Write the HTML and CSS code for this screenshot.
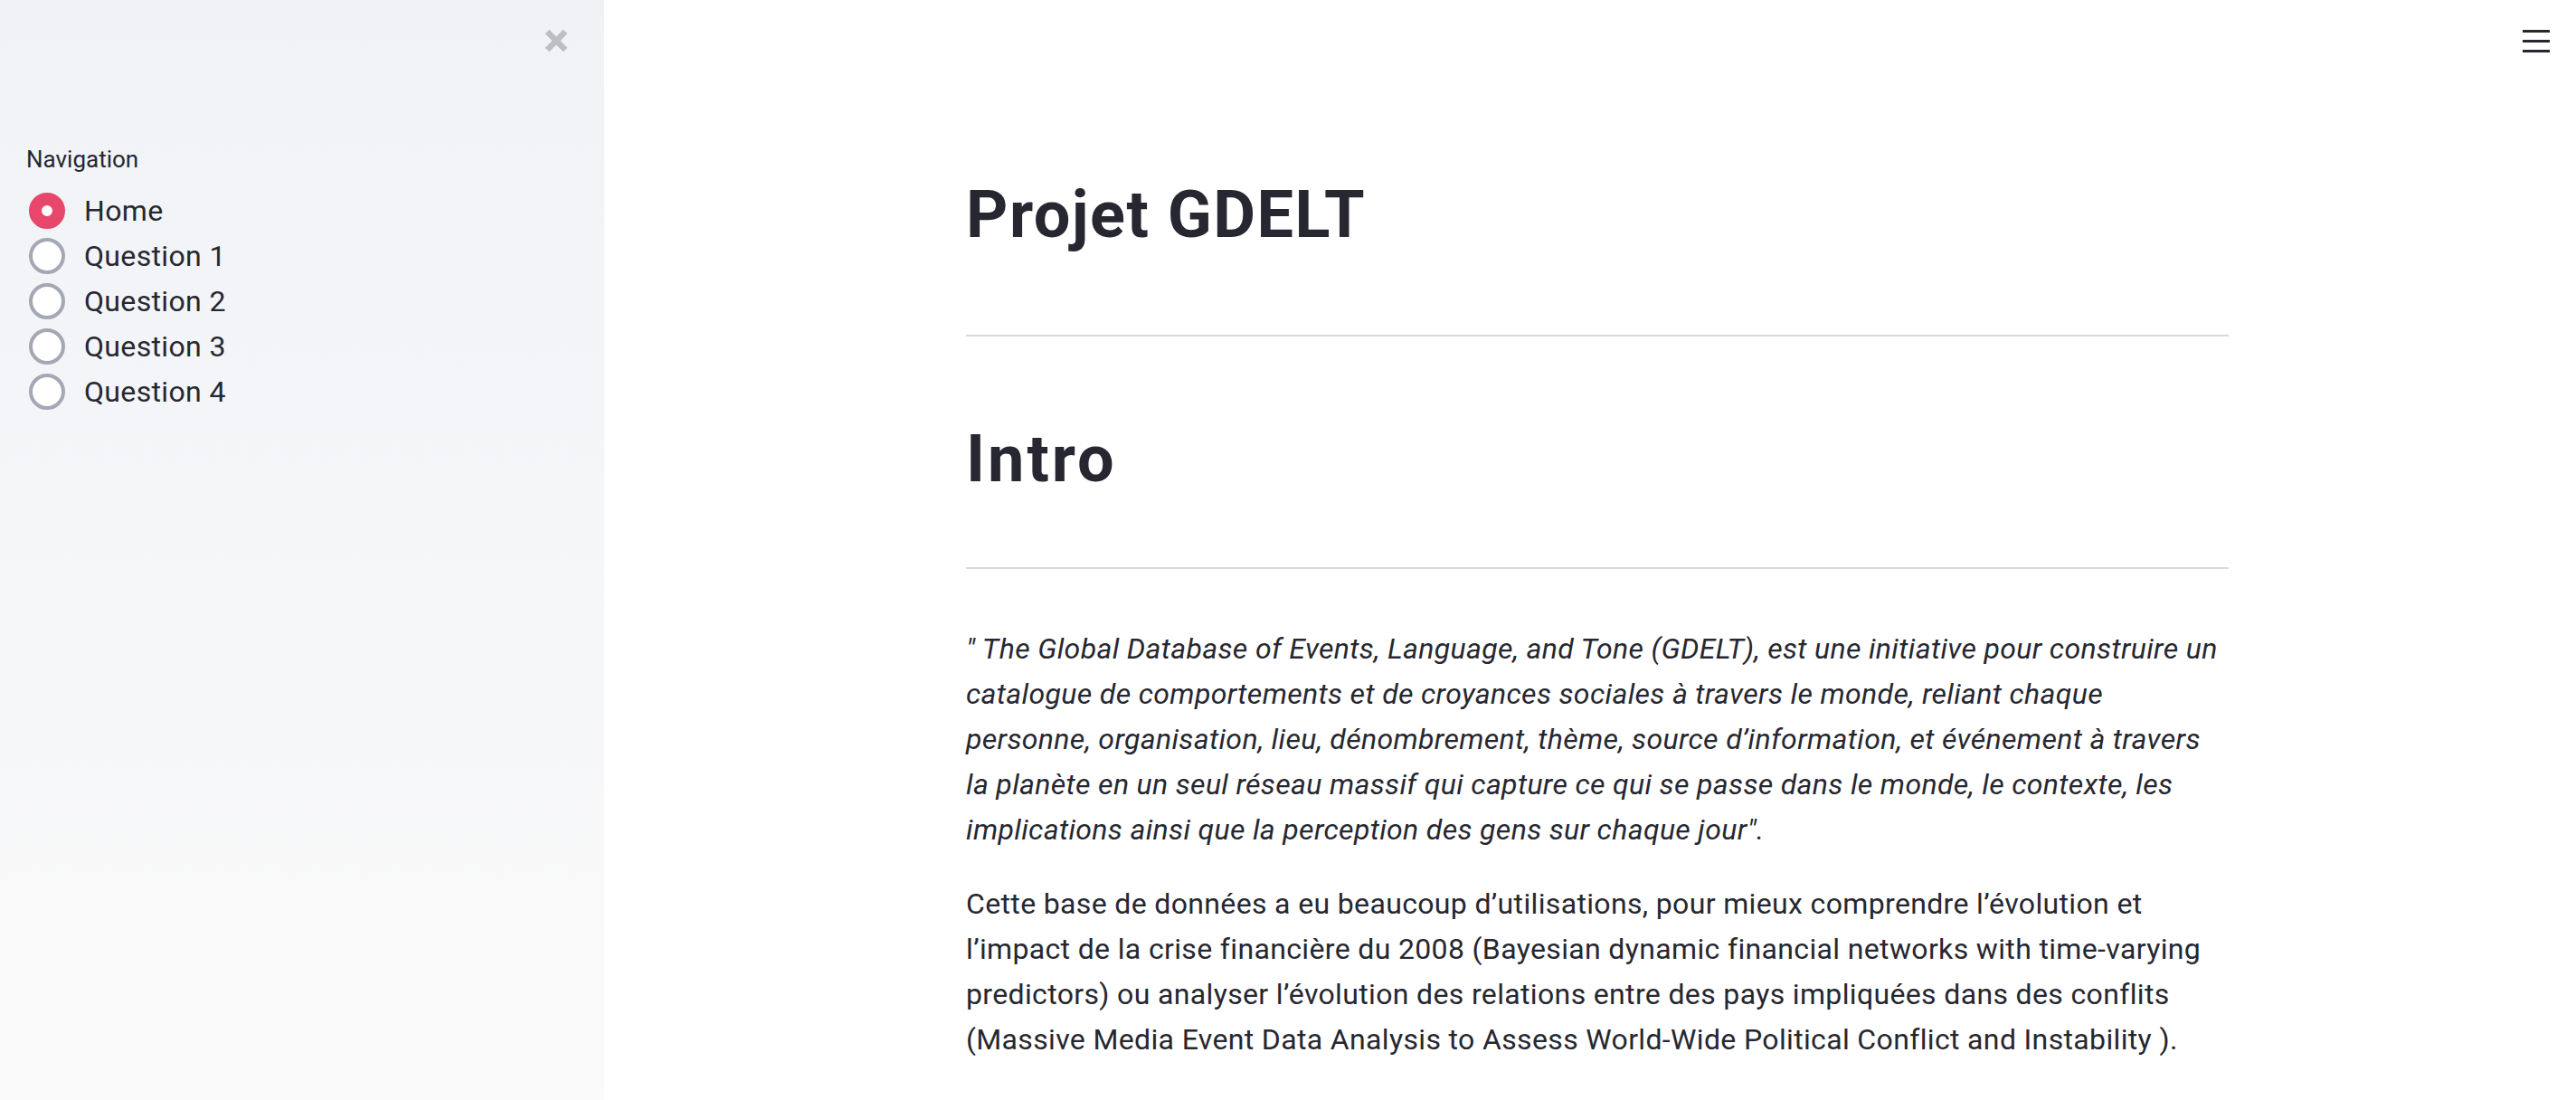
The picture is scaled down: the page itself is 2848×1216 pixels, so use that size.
FILE: index.html
```html
<!DOCTYPE html>
<html lang="fr">
<head>
<meta charset="utf-8">
<title>Projet GDELT</title>
<link rel="stylesheet" href="styles.css">
</head>
<body>
<div class="app">
  <aside class="sidebar">
    <div class="sidebar-header">
      <button class="close-btn" aria-label="Close sidebar">
        <svg width="28" height="28" viewBox="0 0 28 28"><path d="M4 4 L24 24 M24 4 L4 24" stroke="#bdbec4" stroke-width="6.5" stroke-linecap="butt" fill="none"/></svg>
      </button>
    </div>
    <div class="nav">
      <div class="nav-label">Navigation</div>
      <div class="radio-group">
        <label class="radio checked"><span class="radio-dot"></span><span class="radio-text">Home</span></label>
        <label class="radio"><span class="radio-dot"></span><span class="radio-text">Question 1</span></label>
        <label class="radio"><span class="radio-dot"></span><span class="radio-text">Question 2</span></label>
        <label class="radio"><span class="radio-dot"></span><span class="radio-text">Question 3</span></label>
        <label class="radio"><span class="radio-dot"></span><span class="radio-text">Question 4</span></label>
      </div>
    </div>
  </aside>
  <main class="main">
    <button class="menu-btn" aria-label="Menu">
      <svg width="30" height="26" viewBox="0 0 30 26"><path d="M0 2.5 H30 M0 13.5 H30 M0 24.5 H30" stroke="#262730" stroke-width="3.2" fill="none"/></svg>
    </button>
    <div class="block">
      <h1 class="title">Projet GDELT</h1>
      <hr class="rule rule-first">
      <h1 class="title title-second">Intro</h1>
      <hr class="rule rule-second">
      <p class="text quote"><em>" The Global Database of Events, Language, and Tone (GDELT), est une initiative pour construire un catalogue de comportements et de croyances sociales à travers le monde, reliant chaque personne, organisation, lieu, dénombrement, thème, source d’information, et événement à travers la planète en un seul réseau massif qui capture ce qui se passe dans le monde, le contexte, les implications ainsi que la perception des gens sur chaque jour".</em></p>
      <p class="text">Cette base de données a eu beaucoup d’utilisations, pour mieux comprendre l’évolution et l’impact de la crise financière du 2008 (Bayesian dynamic financial networks with time-varying predictors) ou analyser l’évolution des relations entre des pays impliquées dans des conflits (Massive Media Event Data Analysis to Assess World-Wide Political Conflict and Instability ).</p>
    </div>
  </main>
</div>
</body>
</html>
```

FILE: styles.css
```css
html, body {
  margin: 0;
  padding: 0;
  height: 100%;
}
body {
  font-family: Roboto, "Noto Sans", "Liberation Sans", sans-serif;
  color: #262730;
  background: #ffffff;
  overflow: hidden;
}
.app {
  display: flex;
  height: 1216px;
}
.sidebar {
  width: 668px;
  flex: 0 0 668px;
  background-image: linear-gradient(180deg, #f0f2f6 0%, #fafafa 100%);
  box-sizing: border-box;
}
.sidebar-header {
  display: flex;
  justify-content: flex-end;
  padding: 31px 39px 0 0;
  height: 122px;
  box-sizing: border-box;
}
.close-btn {
  border: none;
  background: transparent;
  padding: 0;
  width: 28px;
  height: 28px;
  display: flex;
}
.nav {
  padding: 0 0 0 29px;
}
.nav-label {
  font-size: 26px;
  line-height: 42px;
  height: 42px;
  margin-top: 33px;
  margin-bottom: 11px;
}
.radio-group {
  display: flex;
  flex-direction: column;
}
.radio {
  display: flex;
  align-items: center;
  height: 50px;
  gap: 21px;
  padding-left: 3px;
}
.radio-dot {
  width: 40px;
  height: 40px;
  box-sizing: border-box;
  border-radius: 50%;
  border: 4px solid #a3a8b4;
  background: #ffffff;
  flex: 0 0 40px;
}
.radio.checked .radio-dot {
  border: 14px solid #e6476b;
  background: #ffffff;
}
.radio-text {
  font-size: 32px;
  line-height: 40px;
  letter-spacing: 0.35px;
}
.main {
  flex: 1;
  position: relative;
  padding-left: 16px;
}
.menu-btn {
  position: absolute;
  top: 32px;
  right: 29px;
  border: none;
  background: transparent;
  padding: 0;
  display: flex;
}
.block {
  width: 1396px;
  margin: 0 auto;
  padding-top: 195px;
}
.title {
  font-size: 72px;
  font-weight: 700;
  line-height: 86px;
  letter-spacing: 1.5px;
  margin: 0;
}
.rule {
  border: none;
  border-top: 2px solid #d7d9e2;
  margin: 89px 0 0 0;
  height: 0;
}
.title-second {
  margin-top: 93px;
  letter-spacing: 3px;
}
.rule-second {
  margin-top: 76px;
}
.text {
  font-size: 32px;
  line-height: 50px;
  letter-spacing: 0.35px;
  margin: 0 0 32px 0;
}
.quote {
  margin-top: 63px;
}
```
